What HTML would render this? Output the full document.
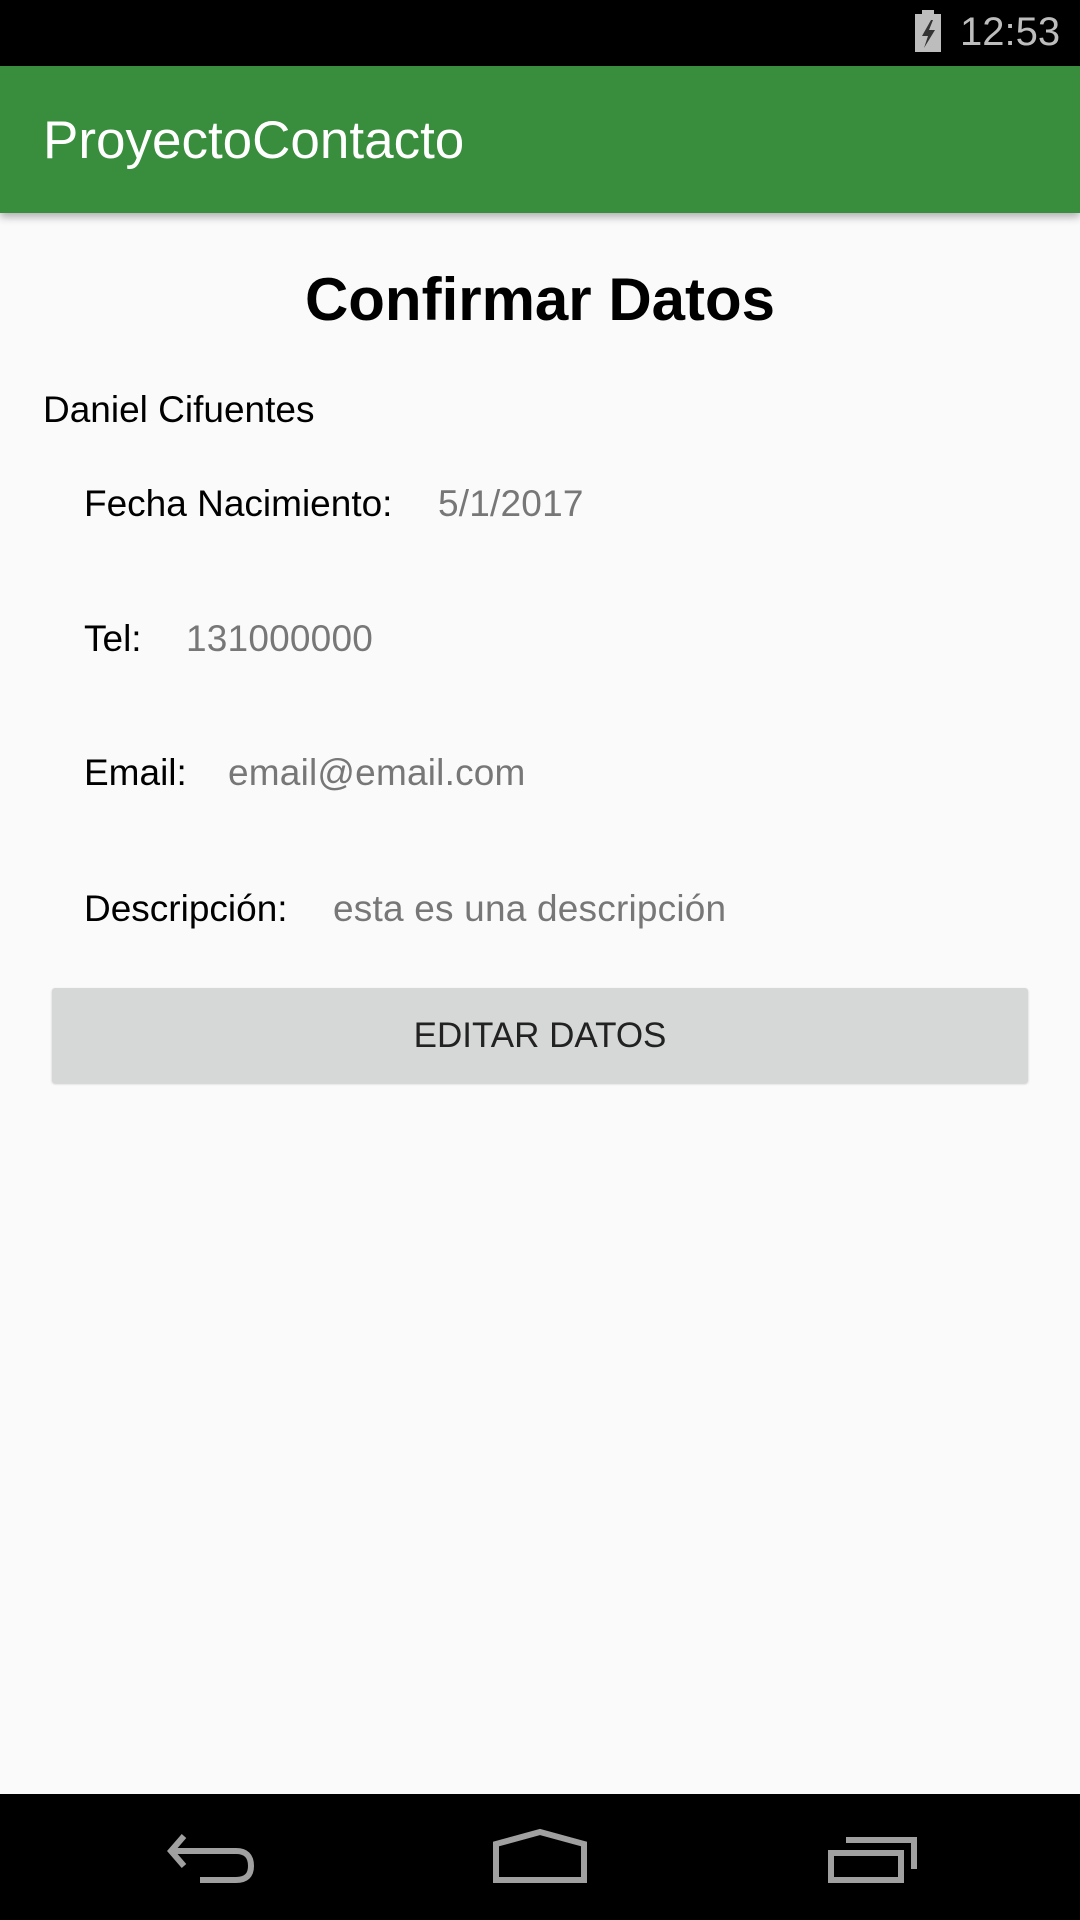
<!DOCTYPE html>
<html><head><meta charset="utf-8"><style>
*{margin:0;padding:0;box-sizing:border-box}
body{width:1080px;height:1920px;background:#fafafa;font-family:"Liberation Sans",sans-serif;position:relative;overflow:hidden}
.abs{position:absolute;white-space:nowrap}
.sb{left:0;top:0;width:1080px;height:66px;background:#000}
.ab{left:0;top:66px;width:1080px;height:147px;background:#388e3c;box-shadow:0 4px 8px rgba(0,0,0,.3)}
.nav{left:0;top:1794px;width:1080px;height:126px;background:#000}
.t{font-size:37px;color:#000;line-height:1}
.v{font-size:37px;color:#777;line-height:1;letter-spacing:0.2px}
</style></head><body>
<div class="abs sb"></div>
<svg class="abs" style="left:912px;top:10px" width="34" height="46" viewBox="0 0 34 46">
<rect x="10" y="0" width="12" height="5" fill="#bdbdbd"/><rect x="3" y="4" width="26" height="38" fill="#bdbdbd"/>
<path d="M19 10 L10 26 H16 L12 38 L23 20 H17 L21 10Z" fill="#333"/></svg>
<div class="abs" style="left:960px;top:12px;font-size:40px;color:#bdbdbd;line-height:1">12:53</div>
<div class="abs ab"></div>
<div class="abs" style="left:43px;top:114px;font-size:53px;color:#fff;line-height:1">ProyectoContacto</div>
<div class="abs" style="left:0;width:1080px;text-align:center;top:270px;font-size:60px;font-weight:bold;line-height:1">Confirmar Datos</div>
<div class="abs t" style="left:43px;top:391px">Daniel Cifuentes</div>
<div class="abs t" style="left:84px;top:485px">Fecha Nacimiento:</div>
<div class="abs v" style="left:438px;top:485px">5/1/2017</div>
<div class="abs t" style="left:84px;top:620px">Tel:</div>
<div class="abs v" style="left:186px;top:620px">131000000</div>
<div class="abs t" style="left:84px;top:754px">Email:</div>
<div class="abs v" style="left:228px;top:754px">email@email.com</div>
<div class="abs t" style="left:84px;top:890px">Descripción:</div>
<div class="abs v" style="left:333px;top:890px">esta es una descripción</div>
<div class="abs" style="left:52px;top:988px;width:976px;height:95px;background:#d6d7d7;border-radius:3px;box-shadow:0 1px 2px rgba(0,0,0,.2);font-size:35px;color:#222;text-align:center;line-height:95px">EDITAR DATOS</div>
<div class="abs nav"></div>
<svg class="abs" style="left:0;top:1794px" width="1080" height="126">
<g fill="none" stroke="#a0a0a0" stroke-width="6">
<path d="M184 42 L171 57 L184 72 M171 57 H236 Q251 57 251 72 Q251 86 236 86 H200"/>
<path d="M496 50 L540 38 L584 50 V86 H496 Z"/>
<path d="M831 59 H901 V86 H831 Z M846 46 H914 V75"/>
</g></svg>
</body></html>
